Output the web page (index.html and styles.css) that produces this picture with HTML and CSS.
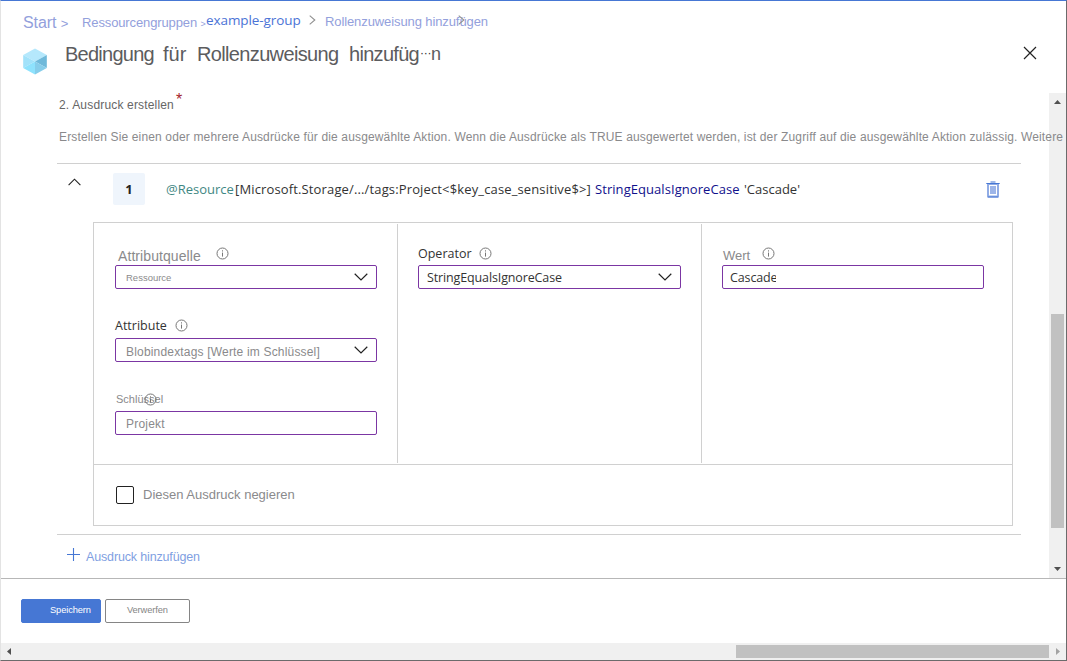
FILE: index.html
```html
<!DOCTYPE html>
<html lang="de">
<head>
<meta charset="utf-8">
<title>Bedingung für Rollenzuweisung hinzufügen</title>
<link rel="stylesheet" href="styles.css">
</head>
<body>
<svg class="defs" width="0" height="0">
  <symbol id="info" viewBox="0 0 13 13"><circle cx="6.5" cy="6.5" r="5.5" fill="none" stroke="#777" stroke-width="1"/><path d="M6.5 5.6v4M6.5 3.3v1.2" fill="none" stroke="#777" stroke-width="1"/></symbol>
  <symbol id="down" viewBox="0 0 14 8"><path d="M.7 .8L7 7L13.3 .8" fill="none" stroke="#222" stroke-width="1.2"/></symbol>
  <symbol id="sep" viewBox="0 0 7 10"><path d="M.7 .6L5.8 5L.7 9.4" fill="none" stroke="#909090" stroke-width="1.1"/></symbol>
</svg>
<div class="window">
  <header class="header">
    <nav class="crumbs">
      <a class="crumb start">Start <span class="gt">&gt;</span></a>
      <a class="crumb groups">Ressourcengruppen <span class="gt">&gt;</span></a>
      <a class="crumb example">example-group</a>
      <svg class="sep" width="7" height="10"><use href="#sep"/></svg>
      <a class="crumb role">Rollenzuweisung hinzufügen<svg class="sep-over" width="7" height="10"><use href="#sep"/></svg></a>
    </nav>
    <div class="title-row">
      <svg class="cube" width="24" height="27" viewBox="0 0 24 27">
        <path d="M12 .5L23.8 7L12 13.5L.2 7Z" fill="#b5e8fc"/>
        <path d="M.2 7L12 13.5L.2 20Z" fill="#a2e2fa"/>
        <path d="M23.8 7L12 13.5L23.8 20Z" fill="#6fb9da"/>
        <path d="M.2 20L12 13.5V26.5Z" fill="#8ee2fd"/>
        <path d="M23.8 20L12 13.5V26.5Z" fill="#86cdea"/>
      </svg>
      <h1 class="title"><span class="t1">Bedingung</span><span class="t2">für</span><span class="t3">Rollenzuweisung</span><span class="t4">hinzufüg</span><span class="t5">···</span><span class="t6">n</span></h1>
      <svg class="close" width="14" height="14" viewBox="0 0 14 14"><path d="M1 1L13 13M13 1L1 13" stroke="#222" stroke-width="1.2"/></svg>
    </div>
  </header>

  <div class="main">
    <section class="content">
      <div class="step"><span class="step-text">2. Ausdruck erstellen</span><span class="star">*</span></div>
      <p class="desc">Erstellen Sie einen oder mehrere Ausdrücke für die ausgewählte Aktion. Wenn die Ausdrücke als TRUE ausgewertet werden, ist der Zugriff auf die ausgewählte Aktion zulässig. Weitere</p>
      <div class="expression">
        <div class="summary">
          <svg class="up" width="13" height="8" viewBox="0 0 13 8"><path d="M.6 7.2L6.5 1.2L12.4 7.2" fill="none" stroke="#222" stroke-width="1.1"/></svg>
          <span class="number">1</span>
          <code class="code"><span class="c1">@Resource</span><span class="c2">[Microsoft.Storage/.../tags:Project&lt;$key_case_sensitive$&gt;]</span><span class="c3">StringEqualsIgnoreCase</span><span class="c4">'Cascade'</span></code>
          <svg class="trash" width="14" height="17" viewBox="0 0 14 17"><rect x="2" y="3" width="10" height="12.5" fill="#fff" stroke="#91ace5" stroke-width="2"/><rect x="4" y="5" width="6" height="8" fill="#9db5e8"/><path d="M.3 2.5h13.4M2 16h10M4.5 1h5" stroke="#4677d4" stroke-width="1.2"/></svg>
        </div>
        <div class="card">
          <div class="columns">
            <div class="column">
              <div class="label l-source"><span>Attributquelle</span><svg width="13" height="13"><use href="#info"/></svg></div>
              <div class="field"><span class="v-source">Ressource</span><svg width="14" height="8"><use href="#down"/></svg></div>
              <div class="label l-attr"><span>Attribute</span><svg width="13" height="13"><use href="#info"/></svg></div>
              <div class="field"><span class="v-attr">Blobindextags [Werte im Schlüssel]</span><svg width="14" height="8"><use href="#down"/></svg></div>
              <div class="label l-key"><span>Schlüssel</span><svg class="key-info" width="13" height="13"><use href="#info"/></svg></div>
              <div class="field"><span class="v-key">Projekt</span></div>
            </div>
            <div class="column">
              <div class="label l-op"><span>Operator</span><svg width="13" height="13"><use href="#info"/></svg></div>
              <div class="field"><span class="v-op">StringEqualsIgnoreCase</span><svg width="14" height="8"><use href="#down"/></svg></div>
            </div>
            <div class="column last">
              <div class="label l-value"><span>Wert</span><svg width="13" height="13"><use href="#info"/></svg></div>
              <div class="field"><span class="v-value">Cascade</span></div>
            </div>
          </div>
          <div class="negate"><span class="box"></span><span class="negate-text">Diesen Ausdruck negieren</span></div>
        </div>
      </div>
      <div class="add"><svg width="13" height="13" viewBox="0 0 13 13"><path d="M6.5 0v13M0 6.5h13" stroke="#4677d4" stroke-width="1.1"/></svg><span>Ausdruck hinzufügen</span></div>
    </section>
    <div class="vbar">
      <svg width="7" height="4"><path d="M0 4L3.5 0L7 4Z" fill="#505050"/></svg>
      <div class="vthumb"></div>
      <svg class="vdown" width="7" height="4"><path d="M0 0L3.5 4L7 0Z" fill="#505050"/></svg>
    </div>
  </div>

  <footer class="footer">
    <button class="btn primary">Speichern</button>
    <button class="btn secondary">Verwerfen</button>
  </footer>
  <div class="hbar">
    <svg width="4" height="7"><path d="M4 0L0 3.5L4 7Z" fill="#505050"/></svg>
    <div class="hthumb"></div>
    <svg width="4" height="7"><path d="M0 0L4 3.5L0 7Z" fill="#a3a3a3"/></svg>
  </div>
</div>
</body>
</html>
```
FILE: styles.css
```css
* { box-sizing: border-box; }
body { margin: 0; background: #fff; font-family: "Liberation Sans", Arial, sans-serif; overflow: hidden; }
.defs { display: none; }
svg { flex: none; display: block; }
.window { width: 1067px; height: 661px; display: flex; flex-direction: column; border: 1px solid #6b6b6b; border-top-color: #4677d4; border-left-color: #e3e3e3; }
.header { height: 92px; flex: none; }

.crumbs { display: flex; align-items: flex-start; height: 40px; padding: 9px 0 0 22px; white-space: pre; line-height: 20px; color: #93a0dc; }
.crumb { flex: none; font-size: 13px; }
.start { width: 59px; font-size: 16px; margin-top: 3px; letter-spacing: -.1px; }
.start .gt { font-size: 13px; }
.groups { width: 124px; margin-top: 3px; letter-spacing: -.12px; }
.groups .gt { font-size: 9px; }
.example { width: 103px; font-family: "Open Sans", sans-serif; font-size: 13.5px; letter-spacing: -.08px; color: #4b73d6; }
.sep { margin: 5px 9px 0 0; }
.role { position: relative; margin-top: 2px; letter-spacing: -.1px; }
.sep-over { position: absolute; left: 133px; top: 3px; margin: 0; }

.title-row { display: flex; align-items: flex-start; padding-left: 22px; }
.cube { margin-top: 7px; }
.title { display: flex; margin: 1px 0 0 18px; width: 958px; font-size: 20px; font-weight: 400; line-height: 24px; color: #5c5c5e; white-space: nowrap; }
.title span { flex: none; }
.t1 { width: 98px; letter-spacing: -.75px; }
.t2 { width: 34px; }
.t3 { width: 152px; letter-spacing: -.65px; }
.t4 { width: 71px; letter-spacing: -.7px; }
.t5 { width: 11px; font-size: 12px; letter-spacing: -.2px; line-height: 22px; color: #333; }
.t6 { font-size: 18px; line-height: 25px; }
.close { margin-top: 5px; }

.main { display: flex; height: 485px; flex: none; }
.content { width: 1048px; flex: none; padding-left: 56px; }
.step { display: flex; height: 34px; padding: 2px 0 0 2px; font-size: 12px; line-height: 20px; color: #666; }
.step-text { width: 117px; letter-spacing: .17px; }
.star { margin-top: -5px; font-size: 16px; color: #a4262c; }
.desc { position: relative; z-index: 1; margin: 0; padding-left: 2px; height: 36px; font-size: 12px; line-height: 20px; letter-spacing: .148px; color: #8a8a8c; white-space: nowrap; }
.expression { width: 964px; height: 372px; border-top: 1px solid #d0d0d0; border-bottom: 1px solid #d0d0d0; }
.summary { display: flex; align-items: flex-start; height: 58px; padding: 9px 0 0 11px; }
.up { margin-top: 5px; }
.number { width: 32px; height: 32px; margin-left: 32px; border-radius: 2px; background: #eff5fc; text-align: center; font: 700 13px/32px "Open Sans", sans-serif; color: #222; }
.code { display: flex; width: 820px; margin-left: 21px; font: 13px/32px "Open Sans", sans-serif; color: #333; white-space: nowrap; }
.code span { flex: none; }
.c1 { width: 69px; color: #3f8783; }
.c2 { width: 360px; letter-spacing: .14px; }
.c3 { width: 149px; letter-spacing: .06px; color: #10108c; }
.trash { margin-top: 8px; }

.card { width: 920px; height: 304px; margin-left: 36px; border: 1px solid #d0d0d0; }
.columns { display: flex; height: 242px; border-bottom: 1px solid #d0d0d0; }
.column { width: 304px; flex: none; padding: 22px 21px 0 21px; background: linear-gradient(#d0d0d0, #d0d0d0) right 1px / 1px 239px no-repeat; }
.column + .column { padding-left: 20px; }
.column.last { width: 306px; padding-right: 24px; background: none; }
.label { display: flex; align-items: flex-start; height: 20px; font-size: 13px; line-height: 20px; color: #8a8a8c; white-space: nowrap; }
.label span { flex: none; }
.label svg { margin-top: 2px; }
.l-source span { width: 101px; padding-left: 3px; font-size: 14px; line-height: 22px; letter-spacing: .08px; }
.field { display: flex; align-items: center; justify-content: space-between; height: 24px; padding: 0 8px 0 10px; border: 1px solid #7b36a3; border-radius: 2px; color: #8a8a8c; white-space: nowrap; }
.l-attr, .l-key { height: 49px; padding-top: 29px; }
.l-attr { font: 12.5px/17px "Open Sans", sans-serif; color: #333; }
.l-attr span { width: 60px; margin-top: -1px; }
.l-attr svg { margin-top: 1px; }
.l-key { position: relative; }
.l-key span { padding-left: 1px; font-size: 11px; line-height: 17px; }
.l-key .key-info { position: absolute; left: 29px; top: 29px; }
.l-op { font: 12.5px/17px "Open Sans", sans-serif; color: #333; }
.l-op span { width: 61px; }
.l-value span { width: 40px; padding-left: 1px; line-height: 22px; }
.v-source { font-size: 9.5px; }
.v-attr { font-size: 12px; padding-top: 3px; letter-spacing: .18px; }
.v-key { font-size: 12px; padding-top: 2px; letter-spacing: .2px; }
.v-op, .v-value { margin-left: -2px; font-family: "Open Sans", sans-serif; font-size: 12.5px; letter-spacing: -.13px; color: #333; }
.v-value { margin-left: -3px; width: 46px; overflow: hidden; }
.negate { display: flex; align-items: center; height: 60px; padding-left: 22px; font-size: 13px; color: #8a8a8c; }
.box { width: 18px; height: 18px; margin-right: 9px; border: 1px solid #222; border-radius: 2px; }
.negate-text { margin-top: -2px; }
.add { display: flex; padding: 13px 0 0 10px; font-size: 12.5px; line-height: 18px; letter-spacing: -.15px; color: #7f9fe2; }
.add span { margin-left: 6px; }

.vbar { display: flex; flex-direction: column; align-items: center; width: 17px; height: 485px; padding: 7px 0 8px; background: #f0f0f0; }
.vthumb { width: 13px; height: 214px; margin: 210px 0 39px; background: #c1c1c1; flex: none; }
.footer { display: flex; gap: 4px; height: 65px; flex: none; padding: 20px; border-top: 1px solid #b7b7b7; }
.btn { height: 24px; flex: none; padding: 0 0 3px; border: 1px solid #4677d4; border-radius: 2px; font: 9.3px "Liberation Sans", Arial, sans-serif; letter-spacing: -.12px; text-align: left; }
.primary { width: 80px; padding-left: 28px; background: #4677d4; color: #fff; }
.secondary { width: 85px; padding-left: 21px; border-color: #858585; background: #fff; color: #858585; }
.hbar { display: flex; align-items: center; height: 17px; flex: none; padding-left: 6px; background: #f0f0f0; }
.hthumb { width: 313px; height: 13px; margin: 0 7px 0 725px; background: #c1c1c1; }
```
